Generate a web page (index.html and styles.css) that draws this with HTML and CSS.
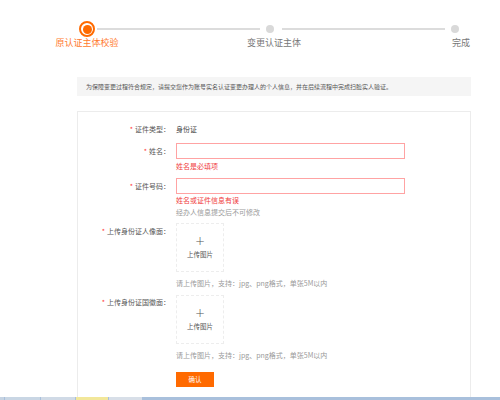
FILE: index.html
```html
<!DOCTYPE html>
<html lang="zh-CN">
<head>
<meta charset="utf-8">
<title>变更认证主体</title>
<link rel="stylesheet" href="styles.css">
</head>
<body>
<div class="page">
  <div class="steps">
    <div class="track">
      <span class="dot dot-active"><span class="dot-core"></span></span>
      <span class="line"></span>
      <span class="dot dot-idle"></span>
      <span class="line"></span>
      <span class="dot dot-idle"></span>
    </div>
    <div class="labels">
      <span class="step-label active">原认证主体校验</span>
      <span class="step-label">变更认证主体</span>
      <span class="step-label">完成</span>
    </div>
  </div>

  <div class="notice">为保障变更过程符合规定，请提交您作为账号实名认证变更办理人的个人信息，并在后续流程中完成扫脸实人验证。</div>

  <div class="card">
    <div class="row row-type">
      <div class="label"><span class="req">*</span>证件类型<span class="colon">：</span></div>
      <div class="field"><span class="value">身份证</span></div>
    </div>

    <div class="row row-input row-name">
      <div class="label"><span class="req">*</span>姓名<span class="colon">：</span></div>
      <div class="field">
        <input class="input" type="text">
      </div>
    </div>
    <div class="row">
      <div class="label"></div>
      <div class="field"><div class="error err-name">姓名是必填项</div></div>
    </div>

    <div class="row row-input row-id">
      <div class="label"><span class="req">*</span>证件号码<span class="colon">：</span></div>
      <div class="field">
        <input class="input" type="text">
      </div>
    </div>
    <div class="row">
      <div class="label"></div>
      <div class="field">
        <div class="error err-id">姓名或证件信息有误</div>
        <div class="hint hint-lock">经办人信息提交后不可修改</div>
      </div>
    </div>

    <div class="row row-upload up-front">
      <div class="label label-top"><span class="req">*</span>上传身份证人像面<span class="colon">：</span></div>
      <div class="field">
        <div class="upload"><span class="plus">+</span><span class="upload-text">上传图片</span></div>
        <div class="hint hint-up">请上传图片，支持：jpg、png格式，单张5M以内</div>
      </div>
    </div>

    <div class="row row-upload up-back">
      <div class="label label-top2"><span class="req">*</span>上传身份证国徽面<span class="colon">：</span></div>
      <div class="field">
        <div class="upload"><span class="plus">+</span><span class="upload-text">上传图片</span></div>
        <div class="hint hint-up">请上传图片，支持：jpg、png格式，单张5M以内</div>
      </div>
    </div>

    <div class="row row-btn">
      <div class="label"></div>
      <div class="field"><button class="btn" type="button">确认</button></div>
    </div>
  </div>
</div>

<div class="taskbar">
  <span class="tb tb-a"></span>
  <span class="tb tb-b"></span>
  <span class="tb tb-c"></span>
  <span class="tb tb-d"></span>
  <span class="tb tb-e"></span>
</div>
</body>
</html>
```

FILE: styles.css
```css
* { box-sizing: border-box; }

html, body {
  margin: 0;
  padding: 0;
  background: #fff;
}

body {
  width: 500px;
  height: 400px;
  overflow: hidden;
  font-family: "Noto Sans CJK SC", "Noto Sans", "Liberation Sans", sans-serif;
  color: #333;
}

.page {
  display: flex;
  flex-direction: column;
  height: 400px;
}

/* ---------- steps ---------- */
.steps {
  padding-top: 21px;
}

.track {
  display: flex;
  align-items: center;
  height: 16px;
  padding-left: 79px;
  padding-right: 35px;
}

.dot {
  flex: none;
  border-radius: 50%;
}

.dot-active {
  width: 16px;
  height: 16px;
  border: 2px solid #ff6a00;
  background: #fff;
  display: flex;
  align-items: center;
  justify-content: center;
}

.dot-core {
  width: 9px;
  height: 9px;
  border-radius: 50%;
  background: #ff6a00;
}

.dot-idle {
  width: 8px;
  height: 8px;
  background: #d9d9d9;
  margin: 0 6px;
}

.line {
  flex: 1;
  height: 2px;
  background: #dcdcdc;
  margin-left: 2px;
}

.labels {
  display: flex;
  gap: 111px;
  padding-left: 49px;
  height: 12px;
}

.step-label {
  width: 76px;
  text-align: center;
  font-size: 9px;
  line-height: 12px;
  color: #777;
  white-space: nowrap;
}

.step-label.active {
  color: #ff7a2e;
}

/* ---------- notice ---------- */
.notice {
  margin: 28px 29px 0 77px;
  height: 19px;
  background: #f5f5f5;
  padding-left: 9px;
  font-size: 6px;
  line-height: 19px;
  color: #555;
  white-space: nowrap;
}

/* ---------- card ---------- */
.card {
  margin: 15px 29px 0 77px;
  flex: 1;
  border: 1px solid #ececec;
  border-bottom: none;
  padding-top: 11px;
}

.row {
  display: flex;
  align-items: flex-start;
}

.label {
  width: 92px;
  flex: none;
  text-align: right;
  font-size: 7px;
  line-height: 12px;
  color: #555;
  white-space: nowrap;
}

.colon {
  font-family: "Noto Sans CJK TC", "Noto Sans CJK SC", sans-serif;
}

.req {
  color: #f33;
  margin-right: 2px;
}

.field {
  margin-left: 6px;
  display: flex;
  flex-direction: column;
  align-items: flex-start;
}

.value {
  font-size: 7px;
  line-height: 12px;
  color: #444;
}

.row-input {
  align-items: center;
}

.row-name { margin-top: 8px; }
.row-id { margin-top: 7px; }

.input {
  display: block;
  width: 229px;
  height: 16px;
  margin: 0;
  border: 1px solid #ffa3a3;
  background: #fff;
  outline: none;
}

.error {
  font-size: 7px;
  line-height: 10px;
  color: #f03c3c;
  white-space: nowrap;
}

.err-name { margin-top: 2px; }
.err-id { margin-top: 1px; }

.hint {
  font-size: 7px;
  line-height: 10px;
  color: #9a9a9a;
  white-space: nowrap;
}

.hint-lock { margin-top: 2px; }

.up-front { margin-top: 6px; }
.up-back { margin-top: 7px; }

.label-top {
  font-size: 7px;
  line-height: 10px;
  padding-top: 3px;
}

.label-top2 {
  font-size: 7px;
  line-height: 10px;
  padding-top: 2px;
}

.upload {
  width: 48px;
  height: 49px;
  border: 1px dashed #ededed;
  display: flex;
  flex-direction: column;
  align-items: center;
  padding-top: 11px;
}

.plus {
  font-family: "DejaVu Sans", sans-serif;
  font-size: 12px;
  line-height: 12px;
  font-weight: 300;
  color: #555;
}

.upload-text {
  font-size: 6.5px;
  line-height: 10px;
  margin-top: 2px;
  color: #555;
}

.hint-up { margin-top: 6px; }

.row-btn { margin-top: 12px; }

.btn {
  width: 38px;
  height: 15px;
  padding: 0;
  border: none;
  background: #ff6a00;
  color: #fff;
  font-family: "Noto Sans CJK SC", sans-serif;
  font-size: 6.5px;
  line-height: 15px;
}

/* ---------- taskbar (overlays page bottom) ---------- */
.taskbar {
  position: fixed;
  left: 0;
  right: 0;
  bottom: 0;
  height: 3px;
  background: #a9c0dc;
  display: flex;
  gap: 1px;
}

.tb { height: 3px; }
.tb-a { width: 4px; background: #c6d3e2; }
.tb-b { width: 35px; background: #c9d6e4; }
.tb-c { width: 34px; background: #d0dae6; }
.tb-d { width: 32px; background: #f2e79a; }
.tb-e { width: 33px; background: #d8dfe8; }
```
